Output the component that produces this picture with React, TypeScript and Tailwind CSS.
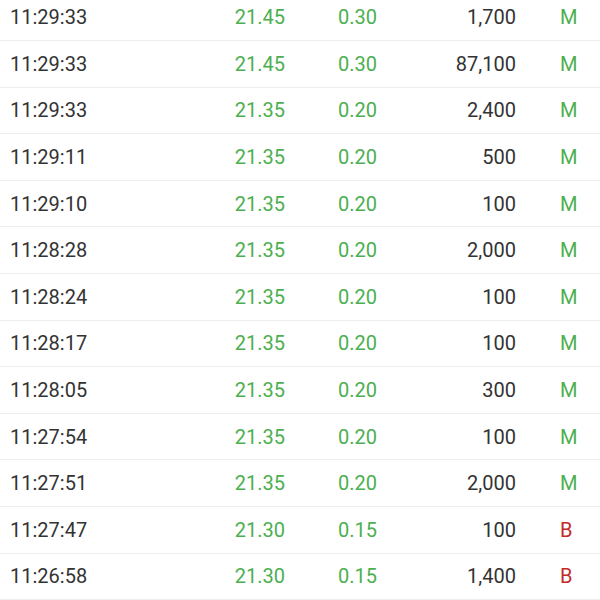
const trades = [
  { time: '11:29:33', price: '21.45', change: '0.30', volume: '1,700', side: 'M' },
  { time: '11:29:33', price: '21.45', change: '0.30', volume: '87,100', side: 'M' },
  { time: '11:29:33', price: '21.35', change: '0.20', volume: '2,400', side: 'M' },
  { time: '11:29:11', price: '21.35', change: '0.20', volume: '500', side: 'M' },
  { time: '11:29:10', price: '21.35', change: '0.20', volume: '100', side: 'M' },
  { time: '11:28:28', price: '21.35', change: '0.20', volume: '2,000', side: 'M' },
  { time: '11:28:24', price: '21.35', change: '0.20', volume: '100', side: 'M' },
  { time: '11:28:17', price: '21.35', change: '0.20', volume: '100', side: 'M' },
  { time: '11:28:05', price: '21.35', change: '0.20', volume: '300', side: 'M' },
  { time: '11:27:54', price: '21.35', change: '0.20', volume: '100', side: 'M' },
  { time: '11:27:51', price: '21.35', change: '0.20', volume: '2,000', side: 'M' },
  { time: '11:27:47', price: '21.30', change: '0.15', volume: '100', side: 'B' },
  { time: '11:26:58', price: '21.30', change: '0.15', volume: '1,400', side: 'B' },
];

function TradeRow({ time, price, change, volume, side }: (typeof trades)[number]) {
  return (
    <div className="grid grid-cols-[175px_110px_92px_139px_1fr] items-center h-[46.6px] border-b border-[#eeeeee] text-[20px]">
      <div className="pl-[10px] text-[#333333]">{time}</div>
      <div className="text-right text-[#4caf50]">{price}</div>
      <div className="text-right text-[#4caf50]">{change}</div>
      <div className="text-right text-[#333333]">{volume}</div>
      <div className={`pl-[44px] ${side === 'B' ? 'text-[#c62828]' : 'text-[#4caf50]'}`}>{side}</div>
    </div>
  );
}

export default function App() {
  return (
    <div className="w-[600px] h-[600px] overflow-hidden bg-white font-['Roboto',sans-serif]">
      <div className="-mt-[5.6px]">
        {trades.map((t, i) => (
          <TradeRow key={i} {...t} />
        ))}
      </div>
    </div>
  );
}
